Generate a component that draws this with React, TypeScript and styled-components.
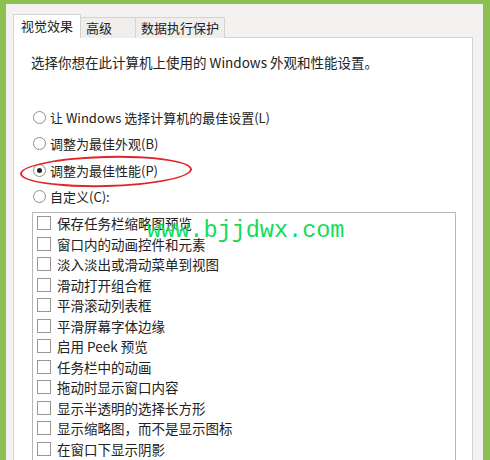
import styled, {createGlobalStyle} from "styled-components";

const GlobalStyle = createGlobalStyle`
    html, body {
        margin: 0;
        padding: 0;
        background: #fff;
    }
    body {
        font-family: "Noto Sans CJK SC", "Noto Sans", sans-serif;
        color: #222;
    }
`;

const effects = [
    "保存任务栏缩略图预览",
    "窗口内的动画控件和元素",
    "淡入淡出或滑动菜单到视图",
    "滑动打开组合框",
    "平滑滚动列表框",
    "平滑屏幕字体边缘",
    "启用 Peek 预览",
    "任务栏中的动画",
    "拖动时显示窗口内容",
    "显示半透明的选择长方形",
    "显示缩略图，而不是显示图标",
    "在窗口下显示阴影",
];

const options = [
    {label: "让 Windows 选择计算机的最佳设置(L)", checked: false, circled: false},
    {label: "调整为最佳外观(B)", checked: false, circled: false},
    {label: "调整为最佳性能(P)", checked: true, circled: true},
    {label: "自定义(C):", checked: false, circled: false},
];

const App = () => {
    return (
        <>
            <GlobalStyle/>
            <Frame>
                <Dialog>
                    <Tabs>
                        <Tab $active>视觉效果</Tab>
                        <Tab>高级</Tab>
                        <Tab>数据执行保护</Tab>
                    </Tabs>
                    <Panel>
                        <Intro>选择你想在此计算机上使用的 Windows 外观和性能设置。</Intro>
                        <Options>
                            {options.map((o) => (
                                <Option key={o.label}>
                                    <Radio $checked={o.checked}/>
                                    <span>{o.label}</span>
                                    {o.circled && <RedCircle/>}
                                </Option>
                            ))}
                        </Options>
                        <ListBox>
                            {effects.map((e) => (
                                <Item key={e}>
                                    <CheckBox/>
                                    <span>{e}</span>
                                </Item>
                            ))}
                            <Watermark>www.bjjdwx.com</Watermark>
                        </ListBox>
                    </Panel>
                </Dialog>
            </Frame>
        </>
    );
}

const Frame = styled.div`
    width: 490px;
    height: 460px;
    overflow: hidden;
    box-sizing: border-box;
    background: #8cc152;
    padding: 4px 7px 0 6px;
`;

const Dialog = styled.div`
    height: 100%;
    background: #f4f1f1;
    padding: 10px 10px 0 7px;
    box-sizing: border-box;
    display: flex;
    flex-direction: column;
`;

const Tabs = styled.div`
    display: flex;
    align-items: flex-end;
    height: 24px;
    position: relative;
    z-index: 1;
`;

const Tab = styled.div<{$active?: boolean}>`
    height: ${p => p.$active ? "24px" : "21px"};
    box-sizing: border-box;
    padding: 0 ${p => p.$active ? "7px" : "5px"};
    font-size: 13px;
    line-height: ${p => p.$active ? "22px" : "20px"};
    border: 1px solid #d5d2d2;
    border-bottom: ${p => p.$active ? "1px solid #fff" : "none"};
    background: ${p => p.$active ? "#fff" : "#f0eded"};
    margin-left: ${p => p.$active ? "0" : "-1px"};
    & + & {
        min-width: 56px;
    }
`;

const Panel = styled.div`
    flex: 1;
    background: #fff;
    border: 1px solid #d5d2d2;
    border-bottom: none;
    margin-top: -1px;
    padding: 15px 16px 0 18px;
    display: flex;
    flex-direction: column;
`;

const Intro = styled.div`
    font-size: 13.5px;
    line-height: 18px;
    margin-left: -1px;
`;

const Options = styled.div`
    display: flex;
    flex-direction: column;
    margin-top: 33px;
`;

const Option = styled.div`
    position: relative;
    display: flex;
    align-items: center;
    gap: 4px;
    height: 26.5px;
    font-size: 13px;
    margin-left: 1px;
`;

const Radio = styled.span<{$checked?: boolean}>`
    width: 11px;
    height: 11px;
    border-radius: 50%;
    border: 1px solid #8d8d8d;
    background: #fff;
    position: relative;
    &::after {
        content: "";
        display: ${p => p.$checked ? "block" : "none"};
        position: absolute;
        left: 3px;
        top: 3px;
        width: 5px;
        height: 5px;
        border-radius: 50%;
        background: #222;
    }
`;

const RedCircle = styled.span`
    position: absolute;
    left: -13px;
    top: -1px;
    width: 168px;
    height: 27px;
    border: 2px solid #e0242a;
    border-radius: 50%;
    transform: rotate(-1.5deg);
    pointer-events: none;
`;

const ListBox = styled.div`
    position: relative;
    flex: 1;
    margin-top: 2px;
    border: 1px solid #b9b6b6;
    border-bottom: none;
    padding: 0 0 0 4px;
`;

const Item = styled.div`
    display: flex;
    align-items: center;
    gap: 6px;
    height: 20.5px;
    font-size: 13.5px;
`;

const CheckBox = styled.span`
    width: 12px;
    height: 12px;
    border: 1px solid #9a9797;
    background: #fff;
`;

const Watermark = styled.div`
    position: absolute;
    left: 114px;
    top: 3px;
    font-family: "Liberation Mono", monospace;
    font-size: 23.5px;
    line-height: 30px;
    color: #12dc5a;
`;

export default App;
